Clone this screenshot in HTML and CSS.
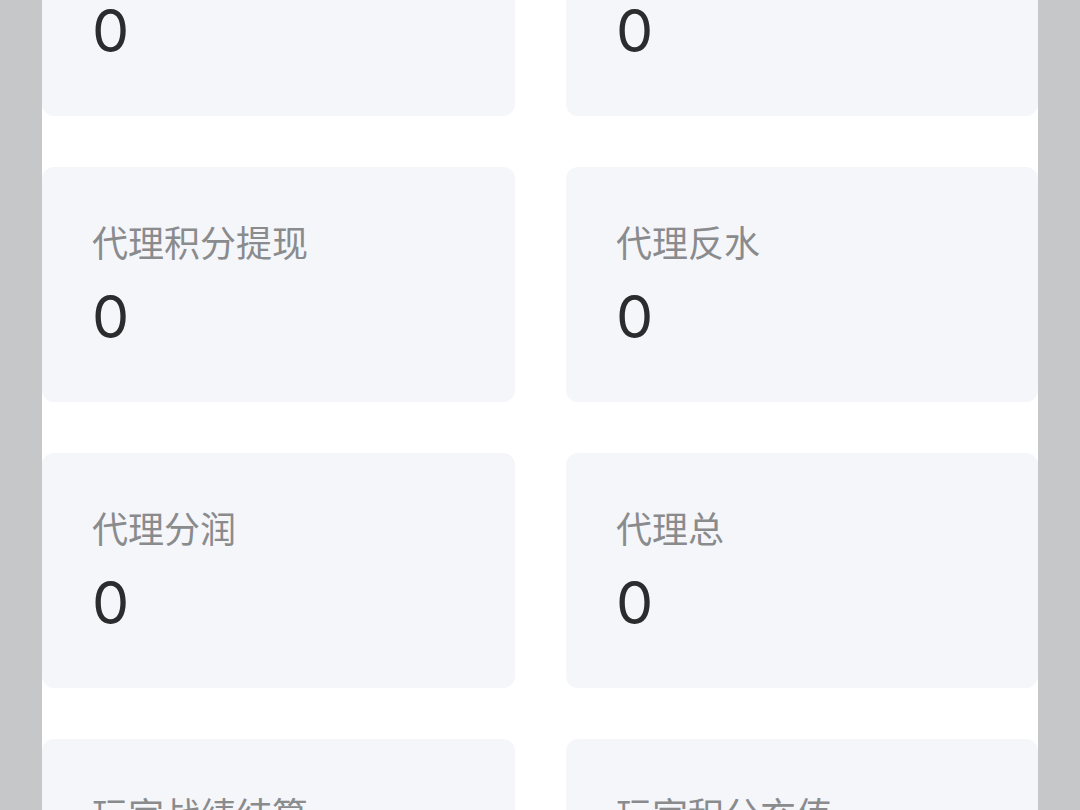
FILE: index.html
```html
<!DOCTYPE html>
<html lang="zh-CN">
	<head>
		<meta charset="UTF-8">
		<title>代理统计</title>
		<link rel="stylesheet" href="styles.css">
	</head>
	<body>
		<div class="panel">
			<div class="stat-grid">
				<div class="stat-card">
					<div class="stat-label">代理积分充值</div>
					<div class="stat-value">0</div>
				</div>
				<div class="stat-card">
					<div class="stat-label">代理战绩结算</div>
					<div class="stat-value">0</div>
				</div>
				<div class="stat-card">
					<div class="stat-label">代理积分提现</div>
					<div class="stat-value">0</div>
				</div>
				<div class="stat-card">
					<div class="stat-label">代理反水</div>
					<div class="stat-value">0</div>
				</div>
				<div class="stat-card">
					<div class="stat-label">代理分润</div>
					<div class="stat-value">0</div>
				</div>
				<div class="stat-card">
					<div class="stat-label">代理总</div>
					<div class="stat-value">0</div>
				</div>
				<div class="stat-card">
					<div class="stat-label">玩家战绩结算</div>
					<div class="stat-value">0</div>
				</div>
				<div class="stat-card">
					<div class="stat-label">玩家积分充值</div>
					<div class="stat-value">0</div>
				</div>
			</div>
		</div>
	</body>
</html>
```

FILE: styles.css
```css
html, body {
	margin: 0;
	padding: 0;
	height: 100%;
	overflow: hidden;
}

body {
	background-color: #c6c7c8;
	font-family: 'Noto Sans CJK SC', 'Noto Sans', sans-serif;
}

.panel {
	margin: 0 42px;
	height: 810px;
	background-color: #ffffff;
	overflow: hidden;
}

.stat-grid {
	display: grid;
	grid-template-columns: 473px 472px;
	column-gap: 51px;
	row-gap: 51px;
	margin-top: -119px;
}

.stat-card {
	height: 235px;
	box-sizing: border-box;
	padding: 52px 0 0 50px;
	background-color: #f5f6fa;
	border-radius: 12px;
}

.stat-label {
	font-size: 36px;
	line-height: 45px;
	color: #8a8b8d;
}

.stat-value {
	margin-top: 17px;
	font-family: 'Inter', 'Noto Sans', sans-serif;
	font-size: 59px;
	line-height: 72px;
	color: #2b2c2e;
}
```
